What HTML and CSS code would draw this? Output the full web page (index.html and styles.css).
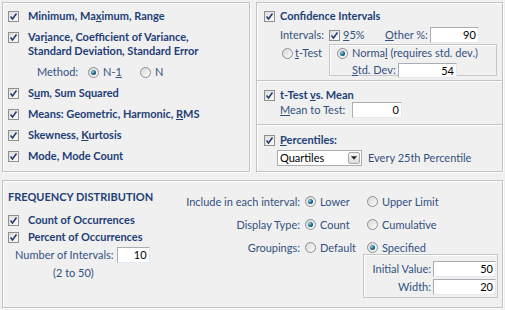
FILE: index.html
```html
<!DOCTYPE html>
<html>
<head>
    <title>Descriptive Statistics Options</title>
    <link rel="stylesheet" href="styles.css">
</head>
<body>
<div class="dialog">
    <div class="top">
        <!-- left: basic statistics -->
        <div class="panel stats">
            <div class="opt"><span class="cb"><svg viewBox="0 0 9 9"><path d="M1.5 4.5 L3.5 7 L7.5 1.5"/></svg></span><b>Minimum, Ma<u>x</u>imum, Range</b></div>
            <div class="opt"><span class="cb"><svg viewBox="0 0 9 9"><path d="M1.5 4.5 L3.5 7 L7.5 1.5"/></svg></span><b>Var<u>i</u>ance, Coefficient of Variance,<br>Standard Deviation, Standard Error</b></div>
            <div class="method">
                <span class="method-label">Method:</span>
                <span class="ro"><span class="rb on"></span><span>N-<u>1</u></span></span>
                <span class="ro"><span class="rb"></span><span>N</span></span>
            </div>
            <div class="opt"><span class="cb"><svg viewBox="0 0 9 9"><path d="M1.5 4.5 L3.5 7 L7.5 1.5"/></svg></span><b>S<u>u</u>m, Sum Squared</b></div>
            <div class="opt"><span class="cb"><svg viewBox="0 0 9 9"><path d="M1.5 4.5 L3.5 7 L7.5 1.5"/></svg></span><b>Means: Geometric, Harmonic, <u>R</u>MS</b></div>
            <div class="opt"><span class="cb"><svg viewBox="0 0 9 9"><path d="M1.5 4.5 L3.5 7 L7.5 1.5"/></svg></span><b>Skewness, <u>K</u>urtosis</b></div>
            <div class="opt"><span class="cb"><svg viewBox="0 0 9 9"><path d="M1.5 4.5 L3.5 7 L7.5 1.5"/></svg></span><b>Mode, Mode Count</b></div>
        </div>

        <!-- right: confidence / t-test / percentiles -->
        <div class="panel side">
            <div class="sec conf">
                <div class="head"><span class="cb"><svg viewBox="0 0 9 9"><path d="M1.5 4.5 L3.5 7 L7.5 1.5"/></svg></span><b>Confidence Intervals</b></div>
                <div class="ci-row">
                    <span class="ci-label">Intervals:</span>
                    <span class="ci-95"><span class="cb"><svg viewBox="0 0 9 9"><path d="M1.5 4.5 L3.5 7 L7.5 1.5"/></svg></span><span><u>9</u>5%</span></span>
                    <span class="ci-other"><u>O</u>ther %:</span>
                    <div class="num w49">90</div>
                </div>
                <div class="ci-lower">
                    <span class="ro ttest"><span class="rb"></span><span><u>t</u>-Test</span></span>
                    <div class="inset normal-box">
                        <span class="ro"><span class="rb on"></span><span>Norma<u>l</u> (requires std. dev.)</span></span>
                        <div class="sd-row">
                            <span class="sd-label"><u>S</u>td. Dev:</span>
                            <div class="num w59">54</div>
                        </div>
                    </div>
                </div>
            </div>

            <div class="sec tmean">
                <div class="head"><span class="cb"><svg viewBox="0 0 9 9"><path d="M1.5 4.5 L3.5 7 L7.5 1.5"/></svg></span><b>t-Test <u>v</u>s. Mean</b></div>
                <div class="mean-row">
                    <span class="mean-label"><u>M</u>ean to Test:</span>
                    <div class="num w50">0</div>
                </div>
            </div>

            <div class="sec pct">
                <div class="head"><span class="cb"><svg viewBox="0 0 9 9"><path d="M1.5 4.5 L3.5 7 L7.5 1.5"/></svg></span><b><u>P</u>ercentiles:</b></div>
                <div class="pct-row">
                    <div class="combo">
                        <span>Quartiles</span>
                        <span class="combo-btn"><svg viewBox="0 0 7 4"><path d="M0 0 L7 0 L3.5 4 Z"/></svg></span>
                    </div>
                    <span>Every 25th Percentile</span>
                </div>
            </div>
        </div>
    </div>

    <!-- bottom: frequency distribution -->
    <div class="panel freq">
        <div class="freq-left">
            <div class="freq-title">FREQUENCY DISTRIBUTION</div>
            <div class="opt first"><span class="cb"><svg viewBox="0 0 9 9"><path d="M1.5 4.5 L3.5 7 L7.5 1.5"/></svg></span><b>Count of Occurrences</b></div>
            <div class="opt"><span class="cb"><svg viewBox="0 0 9 9"><path d="M1.5 4.5 L3.5 7 L7.5 1.5"/></svg></span><b>Percent of Occurrences</b></div>
            <div class="nint-row">
                <span class="nint-label">Number of Intervals:</span>
                <div class="num w33">10</div>
            </div>
            <div class="range-note">(2 to 50)</div>
        </div>

        <div class="freq-right">
            <div class="choice">
                <span class="choice-label">Include in each interval:</span>
                <span class="ro"><span class="rb on"></span><span>Lower</span></span>
                <span class="ro"><span class="rb"></span><span>Upper Limit</span></span>
            </div>
            <div class="choice">
                <span class="choice-label">Display Type:</span>
                <span class="ro"><span class="rb on"></span><span>Count</span></span>
                <span class="ro"><span class="rb"></span><span>Cumulative</span></span>
            </div>
            <div class="choice">
                <span class="choice-label">Groupings:</span>
                <span class="ro"><span class="rb"></span><span>Default</span></span>
                <span class="ro"><span class="rb on"></span><span>Specified</span></span>
            </div>
            <div class="inset spec-box">
                <div class="spec-row"><span>Initial Value:</span><div class="num w63">50</div></div>
                <div class="spec-row"><span>Width:</span><div class="num w63">20</div></div>
            </div>
        </div>
    </div>
</div>
</body>
</html>
```

FILE: styles.css
```css
* {
    box-sizing: border-box;
}

body {
    margin: 0;
    background-color: #f0f0f0;
    font-family: Lato, "Open Sans", sans-serif;
    font-size: 11px;
    line-height: 14px;
    color: #33507f; /* blue-grey label text */
    white-space: nowrap;
}

b {
    color: #1e3e76;
}

u {
    text-decoration: underline;
    text-underline-offset: 1px;
}

.dialog {
    width: 505px;
    height: 310px;
    padding: 2px 2px 0 2px;
}

.top {
    display: flex;
    gap: 6px;
    height: 170px;
}

/* etched group box */
.panel {
    border: 1px solid #c2c2c2;
    box-shadow: inset 1px 1px 0 #fff, 1px 1px 0 #fff;
    background-color: #f0f0f0;
}

.inset {
    border: 1px solid #c6c6c6;
    box-shadow: inset 1px 1px 0 #fff;
}

/* checkbox */
.cb {
    flex: none;
    display: inline-block;
    width: 11px;
    height: 11px;
    border: 1px solid #8e8f8f;
    background: linear-gradient(135deg, #dcdcdc, #fdfdfd);
}

.cb svg {
    display: block;
    width: 9px;
    height: 9px;
    fill: none;
    stroke: #22386f;
    stroke-width: 1.5;
}

/* radio */
.rb {
    flex: none;
    display: inline-block;
    position: relative;
    width: 11px;
    height: 11px;
    border: 1px solid #8e8f8f;
    border-radius: 50%;
    background: linear-gradient(135deg, #d8d8d8, #fcfcfc);
}

.rb.on::after {
    content: "";
    position: absolute;
    left: 2px;
    top: 2px;
    width: 5px;
    height: 5px;
    border-radius: 50%;
    background: radial-gradient(circle at 35% 35%, #8fd8ee, #17607f 55%, #0c3350);
}

.ro {
    display: inline-flex;
    align-items: center;
    gap: 4px;
}

/* text box */
.num {
    flex: none;
    height: 16px;
    background-color: #fff;
    border: 1px solid;
    border-color: #abadb3 #e3e9ef #e3e9ef #abadb3;
    color: #000;
    text-align: right;
    padding-right: 2px;
    line-height: 14px;
}

.w33 { width: 33px; }
.w49 { width: 49px; }
.w50 { width: 50px; }
.w59 { width: 59px; height: 15px; line-height: 13px; }
.w63 { width: 63px; }

/* left panel */
.stats {
    width: 248px;
    padding: 6px 0 0 5px;
    display: flex;
    flex-direction: column;
    gap: 7px;
}

.opt {
    display: flex;
    align-items: flex-start;
    gap: 9px;
}

.opt .cb {
    margin-top: 2px;
}

.method {
    display: flex;
    align-items: center;
    height: 14px;
    padding-left: 29px;
}

.method-label {
    min-width: 51px;
}

.method .ro {
    width: 52px;
}

/* right panel */
.side {
    flex: 1;
    display: flex;
    flex-direction: column;
}

.sec {
    padding-left: 7px;
}

.conf {
    height: 78px;
    padding-top: 6px;
    border-bottom: 1px solid #c2c2c2;
}

.tmean {
    height: 44px;
    padding-top: 6px;
    border-top: 1px solid #fff;
    border-bottom: 1px solid #c2c2c2;
}

.pct {
    flex: 1;
    padding-top: 7px;
    border-top: 1px solid #fff;
}

.head {
    display: flex;
    align-items: center;
    gap: 5px;
    height: 14px;
}

.ci-row {
    display: flex;
    align-items: center;
    height: 16px;
    margin-top: 4px;
    padding-left: 16px;
}

.ci-label {
    min-width: 49px;
}

.ci-95 {
    display: flex;
    align-items: center;
    gap: 3px;
    width: 56px;
}

.ci-other {
    min-width: 43px;
    padding-right: 2px;
}

.ci-lower {
    display: flex;
    align-items: flex-start;
    margin-top: 1px;
    padding-left: 18px;
}

.ttest {
    width: 47px;
    height: 14px;
    margin-top: 2px;
    gap: 2px;
}

.normal-box {
    width: 168px;
    height: 32px;
    padding: 1px 0 0 7px;
}

.sd-row {
    display: flex;
    align-items: center;
    margin-top: 1px;
    padding-left: 15px;
}

.sd-label {
    min-width: 46px;
}

.mean-row {
    display: flex;
    align-items: center;
    height: 16px;
    padding-left: 16px;
}

.mean-label {
    min-width: 72px;
    padding-right: 2px;
}

.pct-row {
    display: flex;
    align-items: center;
    gap: 6px;
    margin-top: 3px;
    padding-left: 13px;
}

.combo {
    display: flex;
    align-items: center;
    justify-content: space-between;
    width: 85px;
    height: 16px;
    padding: 0 1px 0 2px;
    background-color: #fff;
    border: 1px solid #abadb3;
    color: #000;
}

.combo-btn {
    width: 12px;
    height: 12px;
    border: 1px solid #a9a9a9;
    border-radius: 2px;
    background: linear-gradient(#f6f6f6, #dcdcdc);
    display: flex;
    align-items: center;
    justify-content: center;
}

.combo-btn svg {
    width: 6px;
    height: 4px;
    fill: #222;
}

/* frequency distribution */
.freq {
    display: flex;
    height: 128px;
    margin-top: 8px;
}

.freq-left {
    width: 170px;
    padding: 9px 0 0 5px;
}

.freq-title {
    font-weight: bold;
    color: #1e3e76;
}

.freq-left .opt {
    margin-top: 3px;
}

.freq-left .opt.first {
    margin-top: 9px;
}

.nint-row {
    display: flex;
    align-items: center;
    margin-top: 3px;
    padding-left: 7px;
}

.nint-label {
    min-width: 96px;
    padding-right: 3px;
}

.range-note {
    margin-top: 3px;
    padding-left: 45px;
}

.freq-right {
    flex: 1;
    padding-top: 9px;
}

.choice {
    display: flex;
    align-items: center;
    height: 23px;
}

.choice-label {
    width: 132px;
    padding-right: 5px;
    text-align: right;
}

.choice .ro {
    width: 62px;
}

.choice .ro:last-child {
    width: auto;
}

.spec-box {
    width: 135px;
    height: 44px;
    margin: -5px 0 0 190px;
    padding: 6px 1px 0 0;
    display: flex;
    flex-direction: column;
    gap: 2px;
}

.spec-row {
    display: flex;
    align-items: center;
    justify-content: flex-end;
    gap: 2px;
}
```
